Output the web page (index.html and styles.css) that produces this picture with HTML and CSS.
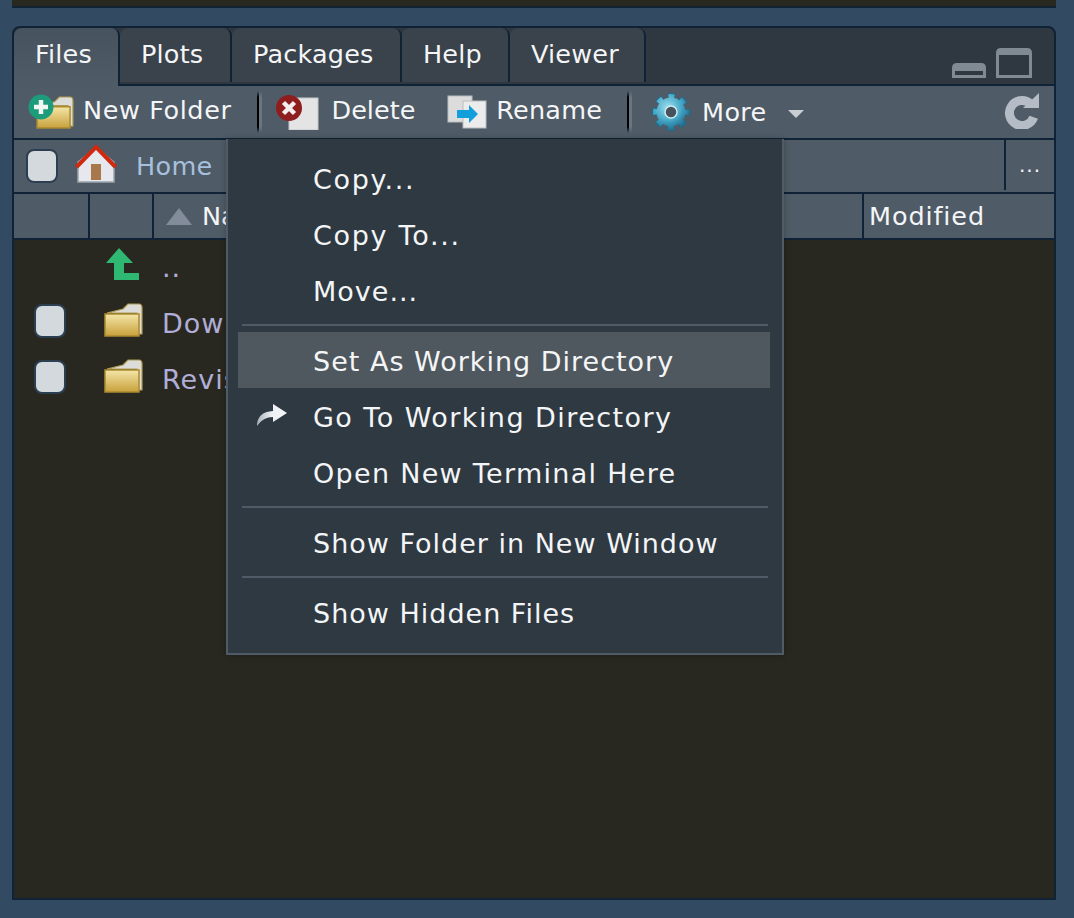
FILE: index.html
```html
<!DOCTYPE html>
<html>
<head lang="en">
    <meta charset="UTF-8">
    <title>Files</title>
    <link rel="stylesheet" href="styles.css">
</head>
<body>
<svg class="defs" width="0" height="0">
    <defs>
        <linearGradient id="folderFill" x1="0" y1="0" x2="0" y2="1">
            <stop offset="0" stop-color="#f4e6a8"/>
            <stop offset="1" stop-color="#c8a13c"/>
        </linearGradient>
        <radialGradient id="gearFill" cx="0.4" cy="0.35" r="0.75">
            <stop offset="0" stop-color="#9fe0ee"/>
            <stop offset="0.6" stop-color="#46a8c8"/>
            <stop offset="1" stop-color="#1f6c8e"/>
        </radialGradient>
        <linearGradient id="goFill" x1="0" y1="0" x2="1" y2="0">
            <stop offset="0" stop-color="#aab2b9"/>
            <stop offset="0.5" stop-color="#eef1f4"/>
            <stop offset="1" stop-color="#f4f6f8"/>
        </linearGradient>
        <symbol id="folder" viewBox="0 0 39 34">
            <path d="M3 10 L19 6 L24 1 H35 Q38 1 38 5 V31 H33 V10 Z" fill="#dcdcd8" stroke="#b09a50" stroke-width="1.2"/>
            <path d="M1 11 H35 V33 H1 Z" fill="url(#folderFill)" stroke="#ab8b30" stroke-width="1.5"/>
        </symbol>
    </defs>
</svg>

<div class="top-pane"></div>

<div class="pane">
    <div class="tabs">
        <div class="tab active">Files</div>
        <div class="tab">Plots</div>
        <div class="tab">Packages</div>
        <div class="tab">Help</div>
        <div class="tab">Viewer</div>
        <div class="pane-btns">
            <svg width="34" height="16" viewBox="0 0 34 16">
                <path d="M0 16 V6 Q0 1 5 1 H29 Q34 1 34 6 V16 Z M3 9 V13 H31 V9 Z" fill="#808a93" fill-rule="evenodd"/>
            </svg>
            <svg width="36" height="30" viewBox="0 0 36 30">
                <path d="M0 30 V5 Q0 0 5 0 H31 Q36 0 36 5 V30 Z M3 7 V27 H33 V7 Z" fill="#808a93" fill-rule="evenodd"/>
            </svg>
        </div>
    </div>

    <div class="toolbar">
        <div class="tool tool-new">
            <svg width="48" height="36" viewBox="0 0 48 36">
                <use href="#folder" x="8" y="2" width="38" height="33"/>
                <circle cx="13" cy="13" r="12.5" fill="#1d9c7c"/>
                <path d="M13 6 V20 M6 13 H20" stroke="#f2f6f2" stroke-width="4.5"/>
            </svg>
            <span class="lbl-new">New Folder</span>
        </div>
        <div class="tool-sep"></div>
        <div class="tool tool-del">
            <svg width="44" height="36" viewBox="0 0 44 36">
                <rect x="13" y="4" width="29" height="32" fill="#e4e4e4" stroke="#c4c8cb"/>
                <circle cx="13" cy="14" r="13" fill="#8f1d1d"/>
                <path d="M7.5 8.5 L18.5 19.5 M18.5 8.5 L7.5 19.5" stroke="#f3eeee" stroke-width="4.5"/>
            </svg>
            <span>Delete</span>
        </div>
        <div class="tool tool-ren">
            <svg width="40" height="34" viewBox="0 0 40 34">
                <rect x="1" y="1" width="24" height="26" fill="#dcdcdc" stroke="#b8bcc0"/>
                <rect x="16" y="6" width="23" height="27" fill="#ececec" stroke="#b8bcc0"/>
                <path d="M10 15 H22 V10 L31 19 L22 28 V23 H10 Z" fill="#139fdc"/>
            </svg>
            <span class="lbl-ren">Rename</span>
        </div>
        <div class="tool-sep"></div>
        <div class="tool tool-more">
            <svg width="38" height="38" viewBox="-19 -19 38 38">
                <circle r="15.5" fill="none" stroke="#1f6c8e" stroke-width="7" stroke-dasharray="6.8 5.37" stroke-dashoffset="3.4"/>
                <circle r="14.5" fill="url(#gearFill)"/>
                <circle r="15.5" fill="none" stroke="url(#gearFill)" stroke-width="5" stroke-dasharray="5.8 6.37" stroke-dashoffset="2.9"/>
                <circle r="6" fill="#46525c" stroke="#cfe9f1" stroke-width="1.5"/>
            </svg>
            <span class="lbl-more">More</span>
            <i class="caret"></i>
        </div>
        <svg class="refresh" width="36" height="38" viewBox="0 0 36 38">
            <path d="M29.7 26.3 A12.5 12.5 0 1 1 26 12.4" fill="none" stroke="#b5bcc6" stroke-width="9"/>
            <path d="M35 2 V17 H19 Z" fill="#b5bcc6"/>
        </svg>
    </div>

    <div class="pathbar">
        <div class="check"></div>
        <svg class="home" width="42" height="40" viewBox="0 0 42 40">
            <path d="M3 18 L21 4 L39 18 V38 H3 Z" fill="#e6e8ee" stroke="#9aa5ad" stroke-width="1.5"/>
            <path d="M1.5 23 L21 3 L40.5 23" fill="none" stroke="#cf2a10" stroke-width="4"/>
            <rect x="16" y="20" width="10" height="16" fill="#a9784a"/>
        </svg>
        <span class="path-link">Home</span>
        <div class="path-more">...</div>
    </div>

    <div class="thead">
        <div class="th th-check"></div>
        <div class="th th-icon"></div>
        <div class="th th-name"><i class="sort"></i>Name</div>
        <div class="th th-size">Size</div>
        <div class="th th-mod">Modified</div>
    </div>

    <div class="list">
        <div class="row">
            <div class="cell-check"></div>
            <div class="cell-icon">
                <svg class="up" width="34" height="34" viewBox="0 0 34 34">
                    <path d="M13 1 L27 16 H18 V26 H33 V33 H8 V16 H0 Z" fill="#2eb872"/>
                </svg>
            </div>
            <div class="cell-name">..</div>
        </div>
        <div class="row">
            <div class="cell-check"><div class="check"></div></div>
            <div class="cell-icon"><svg class="folder" width="39" height="34"><use href="#folder"/></svg></div>
            <div class="cell-name">Downloads</div>
        </div>
        <div class="row">
            <div class="cell-check"><div class="check"></div></div>
            <div class="cell-icon"><svg class="folder" width="39" height="34"><use href="#folder"/></svg></div>
            <div class="cell-name">Revisions</div>
        </div>
    </div>

    <div class="menu">
        <div class="item dots">Copy...</div>
        <div class="item dots">Copy To...</div>
        <div class="item">Move...</div>
        <div class="sep"></div>
        <div class="item hover">Set As Working Directory</div>
        <div class="item wider">
            <svg class="go" width="32" height="24" viewBox="0 0 32 24">
                <path d="M1 23 Q1 9 17 8 V1 L31 10 L17 19 V14 Q7 14 1 23 Z" fill="url(#goFill)"/>
            </svg>
            Go To Working Directory
        </div>
        <div class="item wide">Open New Terminal Here</div>
        <div class="sep"></div>
        <div class="item">Show Folder in New Window</div>
        <div class="sep"></div>
        <div class="item">Show Hidden Files</div>
    </div>
</div>
</body>
</html>
```

FILE: styles.css
```css
body{margin:0;padding:0 18px 18px 12px;background:#324b62;font-family:"DejaVu Sans","Liberation Sans",sans-serif;font-size:25.5px;color:#f4f5f6;height:918px;box-sizing:border-box;overflow:hidden;}
.defs{position:absolute;}
svg{display:block;flex:none;}

.top-pane{height:6px;background:#282820;border-bottom:2px solid #0f2236;margin-bottom:18px;}
.pane{position:relative;height:874px;box-sizing:border-box;border:2px solid #0f2236;border-radius:8px 8px 0 0;background:#282820;display:flex;flex-direction:column;overflow:hidden;}

.tabs{display:flex;height:56px;background:#2f3841;border-bottom:2px solid #0f2236;flex:none;}
.tab{height:54px;padding:0 23px 0 21px;line-height:52px;letter-spacing:.2px;background:#3a424b;border-right:2px solid #0f2236;border-radius:8px 8px 0 0;}
.tab.active{height:58px;background:linear-gradient(#46525d,#4f5b66);}
.tab:nth-child(1){width:60px;}
.tab:nth-child(2){width:66px;}
.tab:nth-child(3){width:124px;}
.tab:nth-child(4){width:62px;}
.tab:nth-child(5){width:90px;}
.pane-btns{margin-left:auto;margin-right:22px;display:flex;align-items:flex-end;gap:10px;padding:18px 0 6px;}

.toolbar{display:flex;align-items:center;height:52px;background:#4f5b66;border-bottom:2px solid #0f2236;flex:none;position:relative;}
.tool{display:flex;align-items:center;}
.tool span{margin-bottom:4px;}
.tool .lbl-more{margin-bottom:0;letter-spacing:.3px;}
.lbl-new{letter-spacing:.6px;}
.lbl-ren{letter-spacing:.2px;}
.tool-new{margin-left:14px;gap:7px;}
.tool-del{margin-left:14px;gap:12px;}
.tool-ren{margin-left:32px;gap:9px;}
.tool-more{margin-left:20px;gap:12px;}
.tool-sep{width:5px;height:42px;margin-left:25px;background:linear-gradient(#4f5b66,transparent 15%,transparent 85%,#4f5b66),linear-gradient(90deg,#000 2px,#6a7580 2px);}
.caret{width:0;height:0;margin-left:9px;margin-top:4px;border:8px solid transparent;border-top:8px solid #c9ced3;border-bottom:0;}
.refresh{margin-left:auto;margin-right:14px;margin-bottom:4px;}

.pathbar{display:flex;align-items:center;height:52px;background:#4f5b66;border-bottom:2px solid #0f2236;flex:none;padding-left:12px;}
.check{width:28px;height:30px;background:#d4d9de;border:2px solid #2c3e52;border-radius:8px;flex:none;}
.home{margin-left:17px;margin-bottom:4px;}
.path-link{margin-left:19px;color:#a6c0dd;letter-spacing:.3px;}
.path-more{margin-left:auto;width:48px;height:50px;align-self:flex-start;border-left:2px solid #0f2236;text-align:center;font-size:20px;letter-spacing:1px;line-height:50px;}

.thead{display:flex;height:44px;background:#4f5b66;border-bottom:2px solid #0f2236;flex:none;line-height:44px;}
.th{border-right:2px solid #0f2236;box-sizing:border-box;white-space:nowrap;}
.th-check{width:76px;}
.th-icon{width:64px;}
.th-name{flex:1;display:flex;align-items:center;padding-left:12px;}
.th-size{width:200px;padding-left:6px;}
.th-mod{width:190px;padding-left:5px;border-right:0;letter-spacing:.9px;}
.sort{width:0;height:0;margin-right:10px;border:13px solid transparent;border-bottom:17px solid #838c9a;border-top:0;}

.list{flex:1;}
.row{display:flex;align-items:center;height:56px;color:#b0aed6;font-size:27px;letter-spacing:1px;}
.row:first-child{height:55px;}
.cell-check{width:56px;padding-left:20px;}
.cell-check .check{margin-bottom:4px;}
.cell-icon{width:64px;padding-left:14px;box-sizing:border-box;}
.cell-name{padding-left:8px;}
.up{margin-left:2px;margin-bottom:8px;}
.folder{margin-bottom:6px;}

.menu{position:absolute;left:212px;top:111px;width:532px;height:502px;background:#2e3942;border:2px solid #4f5b66;border-top:0;box-shadow:0 0 6px rgba(0,0,0,.25);padding:12px 12px 0 10px;font-size:27px;letter-spacing:1px;}
.item{position:relative;height:56px;line-height:58px;padding-left:75px;white-space:nowrap;}
.item.dots{letter-spacing:1.7px;}
.item.wide{letter-spacing:1.3px;}
.item.wider{letter-spacing:1.45px;}
.item.hover{background:#50585f;height:55px;margin-top:-1px;padding-top:1px;margin-bottom:1px;line-height:58px;}
.sep{height:2px;background:#4f5b66;margin:5px 2px 7px 4px;}
.go{position:absolute;left:18px;top:14px;}
```
